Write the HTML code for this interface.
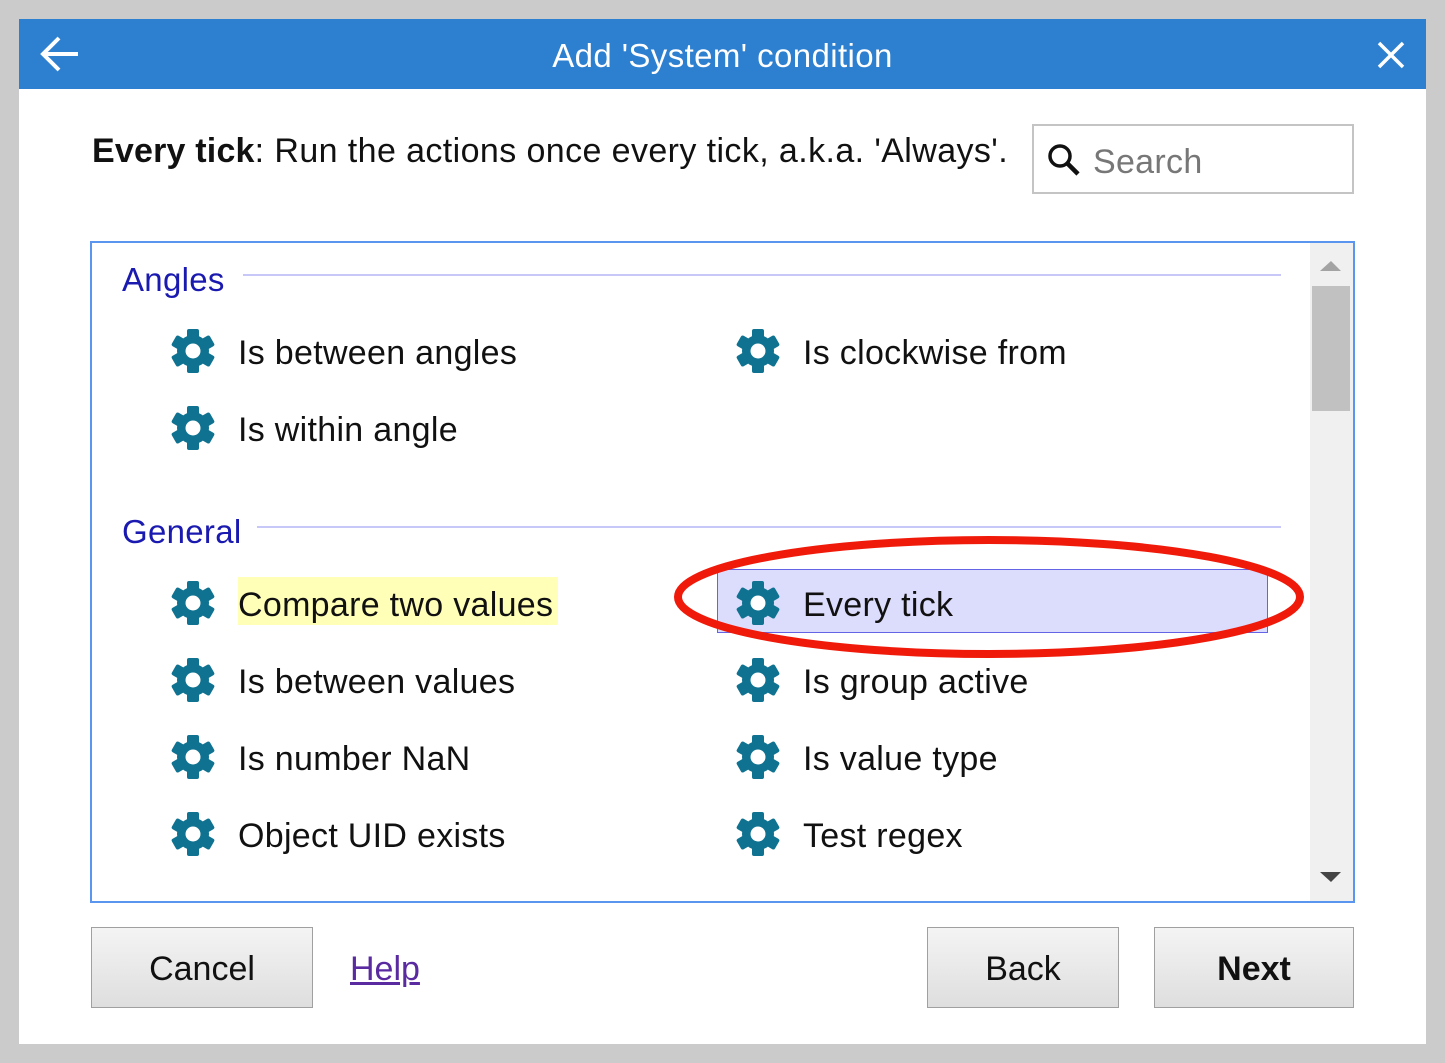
<!DOCTYPE html>
<html><head><meta charset="utf-8"><style>
*{margin:0;padding:0;box-sizing:border-box}
body{width:1445px;height:1063px;background:#cbcbcb;position:relative;overflow:hidden;font-family:"Liberation Sans",sans-serif;}
.a{position:absolute}
#panel{left:19px;top:19px;width:1407px;height:1025px;background:#fff}
#title{left:19px;top:19px;width:1407px;height:70px;background:#2d7fd0;color:#fff;font-size:33px;text-align:center;line-height:74px;letter-spacing:0.4px}
.t{font-size:34px;color:#111;white-space:nowrap;letter-spacing:0.3px}
.h{font-size:33px;color:#1a1ab0;letter-spacing:0.3px}
.line{height:2px;background:#c8c8f8}
.g{width:46px;height:46px}
.btn{border:1px solid #a0a0a0;background:linear-gradient(#f4f4f4,#dedede);font-size:34px;text-align:center;line-height:82px;color:#111}
</style></head><body>
<svg width="0" height="0" style="position:absolute"><defs>
<g id="gear"><g fill="#0f7290">
<circle cx="23" cy="23" r="16"/>
<rect x="17" y="1" width="12" height="44" rx="2"/>
<rect x="17" y="1" width="12" height="44" rx="2" transform="rotate(60 23 23)"/>
<rect x="17" y="1" width="12" height="44" rx="2" transform="rotate(120 23 23)"/>
</g><circle cx="23" cy="23" r="7.5" fill="#fff"/></g>
</defs></svg>
<div class="a" id="panel"></div>
<div class="a" id="title">Add 'System' condition</div>
<svg class="a" style="left:38px;top:34px" width="42" height="40"><path d="M4 20H40M21 4L5 20L21 36" stroke="#fff" stroke-width="4" fill="none"/></svg>
<svg class="a" style="left:1376px;top:40px" width="30" height="30"><path d="M3 3L27 27M27 3L3 27" stroke="#fff" stroke-width="3.5"/></svg>
<div class="a t" style="left:92px;top:132px;letter-spacing:0.4px"><b style="letter-spacing:0.2px">Every tick</b>: Run the actions once every tick, a.k.a. 'Always'.</div>
<div class="a" style="left:1032px;top:124px;width:322px;height:70px;border:2px solid #c4c4c4"></div>
<svg class="a" style="left:1046px;top:142px" width="36" height="36"><circle cx="14" cy="14" r="10" stroke="#111" stroke-width="3.5" fill="none"/><path d="M21 21L32 32" stroke="#111" stroke-width="4.5"/></svg>
<div class="a t" style="left:1093px;top:143px;color:#777">Search</div>
<div class="a" style="left:90px;top:241px;width:1265px;height:662px;border:2px solid #5a96f0"></div>
<div class="a" style="left:1310px;top:243px;width:43px;height:658px;background:#f0f0f0"></div>
<div class="a" style="left:1312px;top:286px;width:38px;height:125px;background:#c1c1c1"></div>
<svg class="a" style="left:1320px;top:260px" width="22" height="12"><path d="M0 11L11 1L21 11Z" fill="#a3a3a3"/></svg>
<svg class="a" style="left:1320px;top:871px" width="22" height="12"><path d="M0 1L11 11L21 1Z" fill="#444"/></svg>
<div class="a h" style="left:122px;top:261px">Angles</div>
<div class="a line" style="left:243px;top:274px;width:1038px"></div>
<div class="a h" style="left:122px;top:513px">General</div>
<div class="a line" style="left:257px;top:526px;width:1024px"></div>
<div class="a" style="left:238px;top:577px;width:320px;height:48px;background:#ffffb8"></div>
<div class="a" style="left:717px;top:569px;width:551px;height:64px;background:#dcdcfc;border:1px solid #6464e6"></div>
<svg class="a g" style="left:170px;top:328px"><use href="#gear"/></svg><div class="a t" style="left:238px;top:334px">Is between angles</div>
<svg class="a g" style="left:735px;top:328px"><use href="#gear"/></svg><div class="a t" style="left:803px;top:334px">Is clockwise from</div>
<svg class="a g" style="left:170px;top:405px"><use href="#gear"/></svg><div class="a t" style="left:238px;top:411px">Is within angle</div>
<svg class="a g" style="left:170px;top:580px"><use href="#gear"/></svg><div class="a t" style="left:238px;top:586px">Compare two values</div>
<svg class="a g" style="left:735px;top:580px"><use href="#gear"/></svg><div class="a t" style="left:803px;top:586px">Every tick</div>
<svg class="a g" style="left:170px;top:657px"><use href="#gear"/></svg><div class="a t" style="left:238px;top:663px">Is between values</div>
<svg class="a g" style="left:735px;top:657px"><use href="#gear"/></svg><div class="a t" style="left:803px;top:663px">Is group active</div>
<svg class="a g" style="left:170px;top:734px"><use href="#gear"/></svg><div class="a t" style="left:238px;top:740px">Is number NaN</div>
<svg class="a g" style="left:735px;top:734px"><use href="#gear"/></svg><div class="a t" style="left:803px;top:740px">Is value type</div>
<svg class="a g" style="left:170px;top:811px"><use href="#gear"/></svg><div class="a t" style="left:238px;top:817px">Object UID exists</div>
<svg class="a g" style="left:735px;top:811px"><use href="#gear"/></svg><div class="a t" style="left:803px;top:817px">Test regex</div>
<svg class="a" style="left:672px;top:532px" width="640" height="130"><ellipse cx="317" cy="65" rx="311" ry="57" stroke="#f01a0a" stroke-width="8" fill="none"/></svg>
<div class="a btn" style="left:91px;top:927px;width:222px;height:81px">Cancel</div>
<div class="a" style="left:350px;top:950px;font-size:34px;color:#5a2aa0;text-decoration:underline">Help</div>
<div class="a btn" style="left:927px;top:927px;width:192px;height:81px">Back</div>
<div class="a btn" style="left:1154px;top:927px;width:200px;height:81px;font-weight:bold">Next</div>
</body></html>
